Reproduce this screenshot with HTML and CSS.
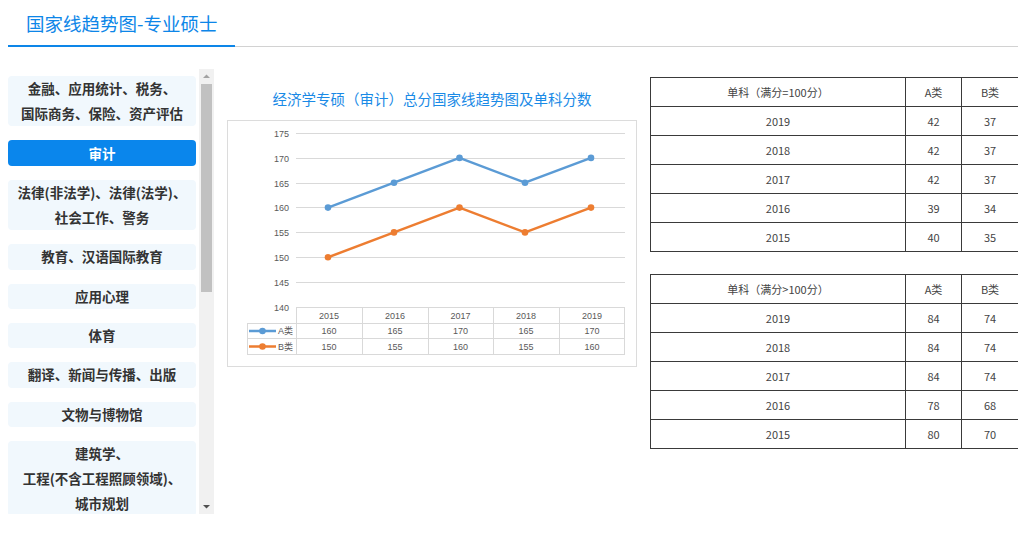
FILE: index.html
```html
<!DOCTYPE html>
<html lang="zh-CN">
<head>
<meta charset="utf-8">
<title>国家线趋势图-专业硕士</title>
<link rel="stylesheet" href="styles.css">
</head>
<body>
<header class="page-head">
  <h1 class="page-title">国家线趋势图-专业硕士</h1>
</header>
<main class="layout">
  <nav class="sidebar">
    <div class="sidebar-viewport">
      <ul class="major-list">
        <li class="major-item">金融、应用统计、税务、<br>国际商务、保险、资产评估</li>
        <li class="major-item is-active">审计</li>
        <li class="major-item">法律(非法学)、法律(法学)、<br>社会工作、警务</li>
        <li class="major-item">教育、汉语国际教育</li>
        <li class="major-item">应用心理</li>
        <li class="major-item">体育</li>
        <li class="major-item">翻译、新闻与传播、出版</li>
        <li class="major-item">文物与博物馆</li>
        <li class="major-item">建筑学、<br>工程(不含工程照顾领域)、<br>城市规划</li>
      </ul>
    </div>
    <div class="scrollbar" aria-hidden="true">
      <div class="scroll-btn">
        <svg width="15" height="15" viewBox="0 0 15 15"><path d="M4 9h7L7.5 5.5z" fill="#a3a3a3"/></svg>
      </div>
      <div class="scroll-track"><div class="scroll-thumb"></div></div>
      <div class="scroll-btn">
        <svg width="15" height="15" viewBox="0 0 15 15"><path d="M4 6h7L7.5 9.5z" fill="#505050"/></svg>
      </div>
    </div>
  </nav>

  <section class="chart-col">
    <h2 class="chart-title">经济学专硕（审计）总分国家线趋势图及单科分数</h2>
    <div class="chart-box">
      <svg class="chart-svg" width="408" height="245" viewBox="0 0 408 245">
        <g class="grid" stroke="#d9d9d9" stroke-width="1">
          <line x1="68" y1="12.5" x2="397" y2="12.5"/>
          <line x1="68" y1="37.5" x2="397" y2="37.5"/>
          <line x1="68" y1="62.5" x2="397" y2="62.5"/>
          <line x1="68" y1="86.5" x2="397" y2="86.5"/>
          <line x1="68" y1="111.5" x2="397" y2="111.5"/>
          <line x1="68" y1="136.5" x2="397" y2="136.5"/>
          <line x1="68" y1="161.5" x2="397" y2="161.5"/>
          <line x1="68" y1="186.5" x2="397" y2="186.5"/>
          <line x1="19" y1="202.5" x2="397" y2="202.5"/>
          <line x1="19" y1="217.5" x2="397" y2="217.5"/>
          <line x1="19" y1="233.5" x2="397" y2="233.5"/>
          <line x1="19.5" y1="202" x2="19.5" y2="234"/>
          <line x1="68.5" y1="186" x2="68.5" y2="234"/>
          <line x1="134.5" y1="186" x2="134.5" y2="234"/>
          <line x1="200.5" y1="186" x2="200.5" y2="234"/>
          <line x1="265.5" y1="186" x2="265.5" y2="234"/>
          <line x1="331.5" y1="186" x2="331.5" y2="234"/>
          <line x1="396.5" y1="186" x2="396.5" y2="234"/>
        </g>
        <g class="axis-labels" fill="#595959" font-size="9" text-anchor="end">
          <text x="61" y="15.5">175</text>
          <text x="61" y="40.5">170</text>
          <text x="61" y="65.5">165</text>
          <text x="61" y="89.5">160</text>
          <text x="61" y="114.5">155</text>
          <text x="61" y="139.5">150</text>
          <text x="61" y="164.5">145</text>
          <text x="61" y="189.5">140</text>
        </g>
        <polyline points="100,86.6 166,61.7 231.5,36.9 297,61.7 363,36.9" fill="none" stroke="#5b9bd5" stroke-width="2.5" stroke-linejoin="round"/>
        <g fill="#5b9bd5">
          <circle cx="100" cy="86.6" r="3.3"/><circle cx="166" cy="61.7" r="3.3"/><circle cx="231.5" cy="36.9" r="3.3"/><circle cx="297" cy="61.7" r="3.3"/><circle cx="363" cy="36.9" r="3.3"/>
        </g>
        <polyline points="100,136.3 166,111.4 231.5,86.6 297,111.4 363,86.6" fill="none" stroke="#ed7d31" stroke-width="2.5" stroke-linejoin="round"/>
        <g fill="#ed7d31">
          <circle cx="100" cy="136.3" r="3.3"/><circle cx="166" cy="111.4" r="3.3"/><circle cx="231.5" cy="86.6" r="3.3"/><circle cx="297" cy="111.4" r="3.3"/><circle cx="363" cy="86.6" r="3.3"/>
        </g>
        <g class="table-text" fill="#595959" font-size="9" text-anchor="middle">
          <text x="101" y="197.5">2015</text>
          <text x="167" y="197.5">2016</text>
          <text x="232.5" y="197.5">2017</text>
          <text x="298" y="197.5">2018</text>
          <text x="364" y="197.5">2019</text>
          <text x="101" y="213">160</text>
          <text x="167" y="213">165</text>
          <text x="232.5" y="213">170</text>
          <text x="298" y="213">165</text>
          <text x="364" y="213">170</text>
          <text x="101" y="228.5">150</text>
          <text x="167" y="228.5">155</text>
          <text x="232.5" y="228.5">160</text>
          <text x="298" y="228.5">155</text>
          <text x="364" y="228.5">160</text>
        </g>
        <line x1="21" y1="210" x2="48" y2="210" stroke="#5b9bd5" stroke-width="2.5"/>
        <circle cx="34.5" cy="210" r="3.3" fill="#5b9bd5"/>
        <line x1="21" y1="225.5" x2="48" y2="225.5" stroke="#ed7d31" stroke-width="2.5"/>
        <circle cx="34.5" cy="225.5" r="3.3" fill="#ed7d31"/>
        <g fill="#595959" font-size="9">
          <text x="50" y="213">A类</text>
          <text x="50" y="228.5">B类</text>
        </g>
      </svg>
    </div>
  </section>

  <section class="tables-col">
    <table class="score-table">
      <colgroup><col class="c-year"><col class="c-a"><col class="c-b"></colgroup>
      <tr><td>单科（满分=100分）</td><td>A类</td><td>B类</td></tr>
      <tr><td>2019</td><td>42</td><td>37</td></tr>
      <tr><td>2018</td><td>42</td><td>37</td></tr>
      <tr><td>2017</td><td>42</td><td>37</td></tr>
      <tr><td>2016</td><td>39</td><td>34</td></tr>
      <tr><td>2015</td><td>40</td><td>35</td></tr>
    </table>
    <table class="score-table">
      <colgroup><col class="c-year"><col class="c-a"><col class="c-b"></colgroup>
      <tr><td>单科（满分&gt;100分）</td><td>A类</td><td>B类</td></tr>
      <tr><td>2019</td><td>84</td><td>74</td></tr>
      <tr><td>2018</td><td>84</td><td>74</td></tr>
      <tr><td>2017</td><td>84</td><td>74</td></tr>
      <tr><td>2016</td><td>78</td><td>68</td></tr>
      <tr><td>2015</td><td>80</td><td>70</td></tr>
    </table>
  </section>
</main>
</body>
</html>
```
FILE: styles.css
```css
* { box-sizing: border-box; }

html, body {
  background: #ffffff;
}

body {
  margin: 8px 6px 0 8px;
  font-family: "Noto Sans CJK SC", "Noto Sans", sans-serif;
  color: #333;
  overflow: hidden;
}

.page-head {
  border-bottom: 1px solid #d2d2d2;
  height: 39px;
}

.page-title {
  display: inline-block;
  margin: 0;
  padding: 0 18px 7px;
  height: 39px;
  line-height: 30px;
  font-size: 18.5px;
  font-weight: normal;
  color: #0d86e8;
  border-bottom: 2px solid #0d86e8;
}

.layout {
  display: flex;
  align-items: flex-start;
  margin-top: 22px;
}

.sidebar {
  width: 206px;
  height: 445px;
  display: flex;
  flex-shrink: 0;
}

.sidebar-viewport {
  flex: 1;
  overflow: hidden;
  padding: 7px 3px 0 0;
}

.scrollbar {
  width: 15px;
  display: flex;
  flex-direction: column;
  background: #f1f1f1;
}

.scroll-btn {
  height: 15px;
  flex-shrink: 0;
}

.scroll-btn svg { display: block; }

.scroll-track {
  flex: 1;
  display: flex;
  flex-direction: column;
}

.scroll-thumb {
  height: 208px;
  margin: 0 2px;
  background: #c1c1c1;
}

.major-list {
  list-style: none;
  margin: 0;
  padding: 0;
}

.major-item {
  background: #f1f8fd;
  border-radius: 4px;
  text-align: center;
  font-size: 13.5px;
  font-weight: bold;
  line-height: 25px;
  padding: 0.2px 4px;
  margin-bottom: 14px;
  color: #333;
}

.major-item.is-active {
  background: #0a86ec;
  color: #fff;
}

.chart-col {
  width: 410px;
  margin-left: 13px;
  padding-top: 18px;
  flex-shrink: 0;
}

.chart-title {
  margin: 0 0 9px;
  text-align: center;
  font-size: 14.5px;
  line-height: 24px;
  font-weight: normal;
  color: #1a8ae6;
}

.chart-box {
  border: 1px solid #dcdcdc;
  width: 410px;
  height: 247px;
}

.chart-svg {
  display: block;
  font-family: "Liberation Sans", "Noto Sans CJK SC", sans-serif;
}

.tables-col {
  width: 368px;
  margin-left: 13px;
  margin-top: 8px;
  display: flex;
  flex-direction: column;
  gap: 22px;
}

.score-table {
  width: 368px;
  border-collapse: collapse;
  table-layout: fixed;
  font-size: 11px;
  color: #444;
}

.score-table .c-year { width: 255px; }
.score-table .c-a { width: 56px; }
.score-table .c-b { width: 57px; }

.score-table tr { height: 29px; }

.score-table td {
  border: 1px solid #3a3a3a;
  text-align: center;
  padding: 0;
  height: 29px;
}
```
